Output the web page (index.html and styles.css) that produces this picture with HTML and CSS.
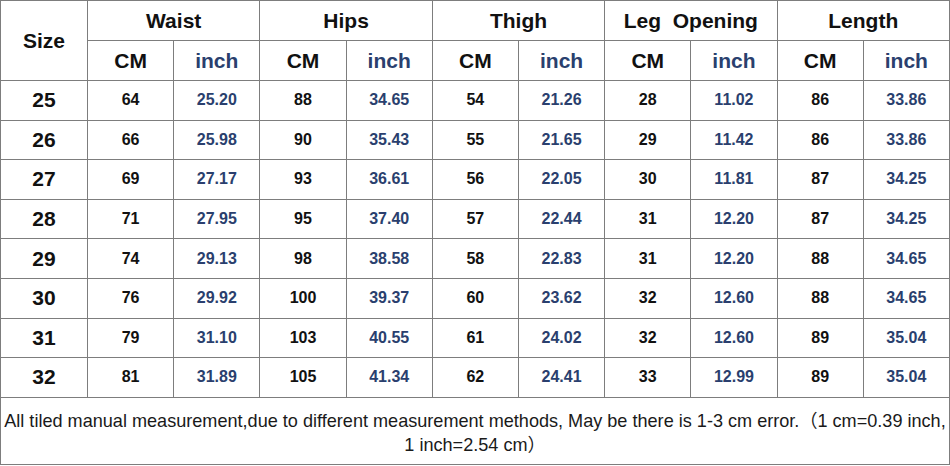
FILE: index.html
```html
<!DOCTYPE html>
<html>
<head>
<meta charset="utf-8">
<link rel="stylesheet" href="styles.css">
</head>
<body>
<table class="chart">
  <colgroup>
    <col class="c-size">
    <col span="10" class="c-val">
  </colgroup>
  <thead>
    <tr class="hrow">
      <th rowspan="2" class="size-h">Size</th>
      <th colspan="2">Waist</th>
      <th colspan="2">Hips</th>
      <th colspan="2">Thigh</th>
      <th colspan="2">Leg&nbsp; Opening</th>
      <th colspan="2">Length</th>
    </tr>
    <tr class="hrow">
      <th>CM</th><th class="blue">inch</th>
      <th>CM</th><th class="blue">inch</th>
      <th>CM</th><th class="blue">inch</th>
      <th>CM</th><th class="blue">inch</th>
      <th>CM</th><th class="blue">inch</th>
    </tr>
  </thead>
  <tbody>
    <tr><th class="size">25</th><td>64</td><td class="blue">25.20</td><td>88</td><td class="blue">34.65</td><td>54</td><td class="blue">21.26</td><td>28</td><td class="blue">11.02</td><td>86</td><td class="blue">33.86</td></tr>
    <tr><th class="size">26</th><td>66</td><td class="blue">25.98</td><td>90</td><td class="blue">35.43</td><td>55</td><td class="blue">21.65</td><td>29</td><td class="blue">11.42</td><td>86</td><td class="blue">33.86</td></tr>
    <tr><th class="size">27</th><td>69</td><td class="blue">27.17</td><td>93</td><td class="blue">36.61</td><td>56</td><td class="blue">22.05</td><td>30</td><td class="blue">11.81</td><td>87</td><td class="blue">34.25</td></tr>
    <tr><th class="size">28</th><td>71</td><td class="blue">27.95</td><td>95</td><td class="blue">37.40</td><td>57</td><td class="blue">22.44</td><td>31</td><td class="blue">12.20</td><td>87</td><td class="blue">34.25</td></tr>
    <tr><th class="size">29</th><td>74</td><td class="blue">29.13</td><td>98</td><td class="blue">38.58</td><td>58</td><td class="blue">22.83</td><td>31</td><td class="blue">12.20</td><td>88</td><td class="blue">34.65</td></tr>
    <tr><th class="size">30</th><td>76</td><td class="blue">29.92</td><td>100</td><td class="blue">39.37</td><td>60</td><td class="blue">23.62</td><td>32</td><td class="blue">12.60</td><td>88</td><td class="blue">34.65</td></tr>
    <tr><th class="size">31</th><td>79</td><td class="blue">31.10</td><td>103</td><td class="blue">40.55</td><td>61</td><td class="blue">24.02</td><td>32</td><td class="blue">12.60</td><td>89</td><td class="blue">35.04</td></tr>
    <tr><th class="size">32</th><td>81</td><td class="blue">31.89</td><td>105</td><td class="blue">41.34</td><td>62</td><td class="blue">24.41</td><td>33</td><td class="blue">12.99</td><td>89</td><td class="blue">35.04</td></tr>
  </tbody>
  <tfoot>
    <tr class="frow">
      <td colspan="11" class="note">All tiled manual measurement,due to different measurement methods, May be there is 1-3 cm error.（1 cm=0.39 inch, 1 inch=2.54 cm）</td>
    </tr>
  </tfoot>
</table>
</body>
</html>
```

FILE: styles.css
```css
html, body {
  margin: 0;
  padding: 0;
  background: #ffffff;
}

.chart {
  width: 949px;
  margin: 0;
  border-collapse: collapse;
  table-layout: fixed;
  font-family: "Liberation Sans", Arial, "Noto Sans CJK SC", sans-serif;
  color: #111111;
}

.c-size { width: 87px; }
.c-val { width: 86.2px; }

.chart th,
.chart td {
  border: 1px solid #7d7d7d;
  padding: 0;
  text-align: center;
  vertical-align: middle;
}

.hrow th {
  height: 39px;
  font-size: 21px;
  font-weight: bold;
}

.size-h {
  font-size: 21px;
}

.chart tbody tr {
  height: 39.6px;
}

.chart th.size {
  font-size: 21px;
  font-weight: bold;
}

.chart tbody td {
  font-size: 16px;
  font-weight: bold;
}

.blue {
  color: #2a3f6e;
}

.frow td.note {
  height: 62px;
  font-size: 18.1px;
  font-weight: normal;
  line-height: 24px;
  padding: 4px 2px 0;
  color: #1a1a1a;
}
```
